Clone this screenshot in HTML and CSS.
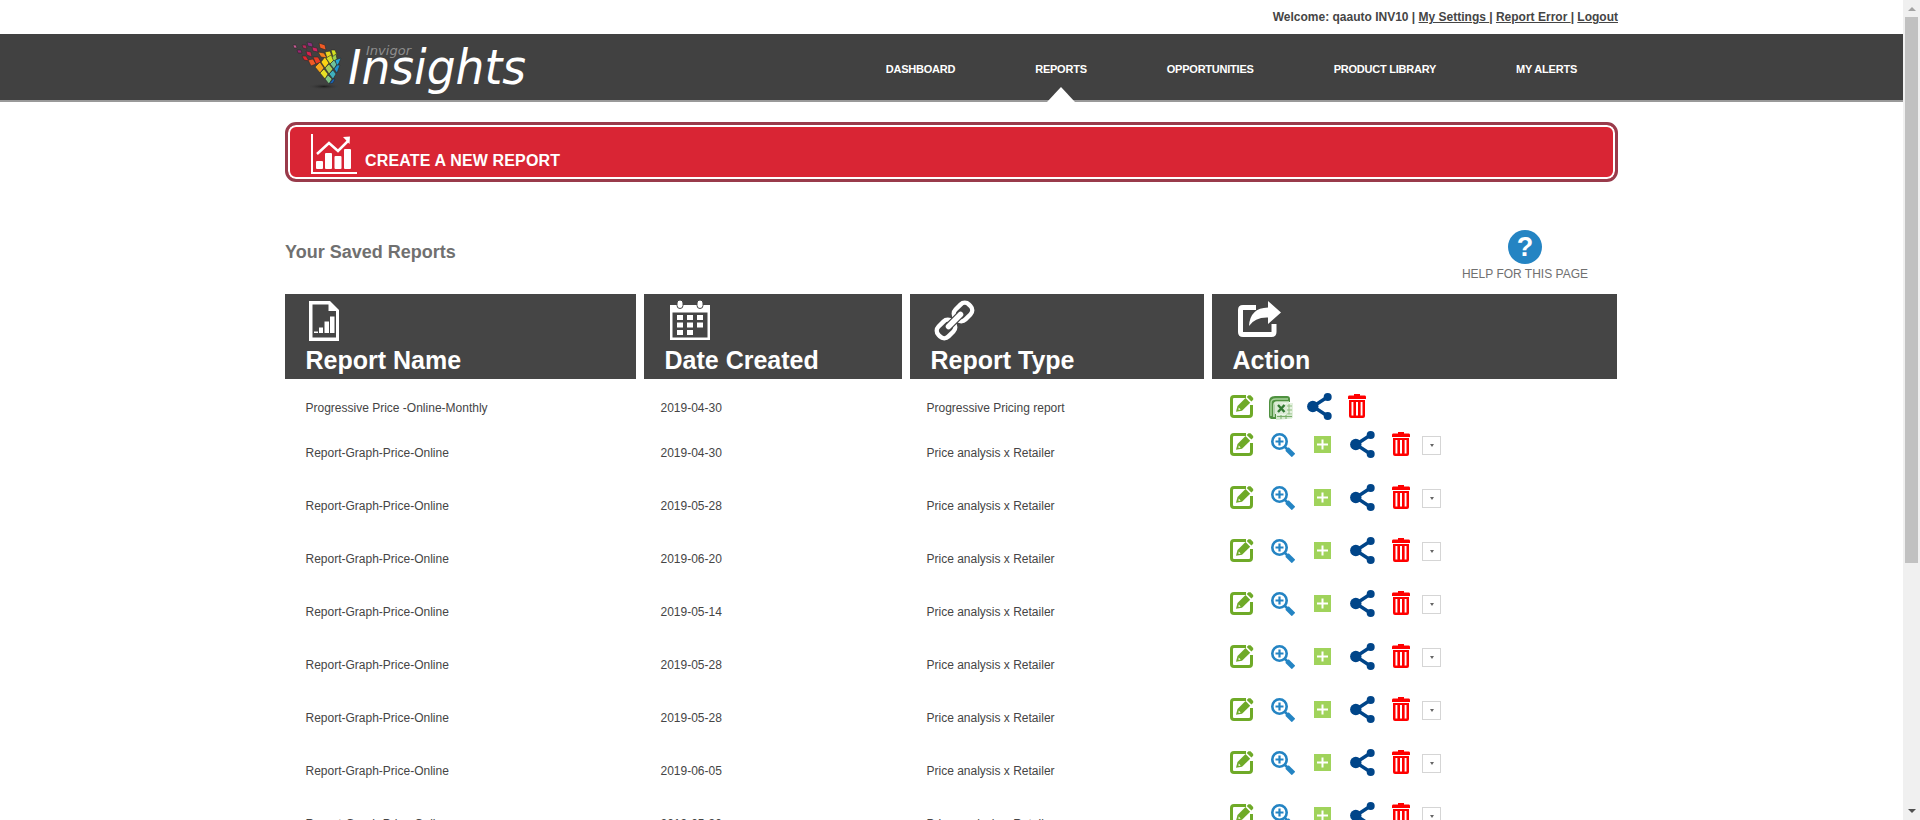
FILE: index.html
```html
<!DOCTYPE html>
<html lang="en">
<head>
<meta charset="utf-8">
<title>Insights - Reports</title>
<link rel="stylesheet" href="styles.css">
</head>
<body>
<svg class="sprite" width="0" height="0">
  <defs>
    <symbol id="i-edit" viewBox="0 0 24 24">
      <path d="M16 1.500H4Q1.500 1.500 1.500 4V19Q1.500 21.500 4 21.500H19Q21.500 21.500 21.500 19V10" fill="none" stroke="#6faa28" stroke-width="3"/>
      <path d="M6 16.800L7.500 11L15.500 3L20.200 7.700L12 15.800Z" fill="#6faa28"/>
      <path d="M16.700 2L18.500 .2H20.500L23.200 3V4.700L21.400 6.600Z" fill="#6faa28"/>
      <path d="M8.700 12.500L10.700 14.500L8.500 15Z" fill="#fff"/>
    </symbol>
    <symbol id="i-zoom" viewBox="0 0 24 24">
      <circle cx="8.500" cy="8.500" r="7.200" fill="none" stroke="#2484c3" stroke-width="2.600"/>
      <path d="M8.500 4.500V12.500M4.500 8.500H12.500" stroke="#2484c3" stroke-width="2.200"/>
      <path d="M13.500 13.500L17 17" stroke="#2484c3" stroke-width="2.600"/>
      <path d="M16 16L22.500 22.500" stroke="#2484c3" stroke-width="4.800"/>
    </symbol>
    <symbol id="i-plus" viewBox="0 0 17 17">
      <path d="M0 0H17V17H0Z" fill="#a0d35b"/>
      <path d="M8.500 3.500V13.500M3 8.500H14" stroke="#fff" stroke-width="2"/>
    </symbol>
    <symbol id="i-share" viewBox="0 0 25 27">
      <path d="M20.500 4L6 13.500L20.500 23" fill="none" stroke="#004589" stroke-width="3.400"/>
      <circle cx="5.800" cy="13.500" r="5.700" fill="#004589"/>
      <circle cx="20.700" cy="4" r="4" fill="#004589"/>
      <circle cx="20.700" cy="23" r="4" fill="#004589"/>
    </symbol>
    <symbol id="i-trash" viewBox="0 0 18 24">
      <path d="M6 0H12V1.500H17Q18 1.500 18 3V5H0V3Q0 1.500 1 1.500H6Z" fill="#f00"/>
      <path d="M1 6H17V22Q17 24 15 24H3Q1 24 1 22Z" fill="#f00"/>
      <path d="M4.500 8V21.500M9 8V21.500M13.500 8V21.500" stroke="#fff" stroke-width="2"/>
      <path d="M6.750 8V21.500M11.250 8V21.500" stroke="#f00" stroke-width="2"/>
    </symbol>
    <symbol id="i-excel" viewBox="0 0 24 24">
      <path d="M0 6Q0 0 6 0H18Q21 0 21 3V6H7V23H3Q0 23 0 20Z" fill="#4f9140"/>
      <path d="M2 20V7Q2 3 7 3H19" fill="none" stroke="#a9d39c" stroke-width="1.500"/>
      <path d="M5 21V9Q5 6 8 6H20" fill="none" stroke="#d4e8cd" stroke-width="1.500"/>
      <path d="M17 7H24V22L17 20Z" fill="#e4f1df"/>
      <path d="M17 10H23M17 14H23M17 18H23M20 8V20" stroke="#8fbd80"/>
      <path d="M6 6L18 8V18L6 18Z" fill="#dcebd7"/>
      <path d="M9 9L15.500 16M15.500 9L9 16" stroke="#327a32" stroke-width="2.400"/>
      <path d="M7 18.500H23V22.500L7 24Z" fill="#d6ead0"/>
      <path d="M8 20.500H23M12 19V23M17 19V23" stroke="#78ad69"/>
    </symbol>
  </defs>
</svg>

<div class="page">
  <div class="userbar wrap">
    <span>Welcome: qaauto INV10 | <a href="#">My Settings </a>| <a href="#">Report Error </a>| <a href="#">Logout</a></span>
  </div>

  <header class="masthead">
    <div class="wrap masthead-row">
      <svg class="logo" width="250" height="66" viewBox="0 0 250 66">
        <defs><radialGradient id="shade"><stop offset="0" stop-color="#1d1d1d"/><stop offset="1" stop-color="#414141" stop-opacity="0"/></radialGradient></defs>
        <ellipse cx="39" cy="52.500" rx="17" ry="3" fill="url(#shade)"/>
        <g stroke="#2a2a2a" stroke-width=".6">
          <path d="M8 11l3 0l1 3l-3 0z" fill="#c45a92"/>
          <path d="M12 16l4 0l1 3l-4 0z" fill="#9b2672"/>
          <path d="M17 11l4 0l1 4l-4-1z" fill="#b7285d"/>
          <path d="M22 8l5 1l1 4l-5-1z" fill="#8e2f80"/>
          <path d="M17 22l4 0l3 5l-5-1z" fill="#e2262e"/>
          <path d="M21 17l5 1l1 5l-5-2z" fill="#d5214d"/>
          <path d="M27 13l5 1l1 4l-5-1z" fill="#d12462"/>
          <path d="M34 9l6 2l1 5l-6-2z" fill="#f05a24"/>
          <path d="M23 26l5-1l3 5l-5 2z" fill="#f05a24"/>
          <path d="M28 23l5 0l3 5l-5 2z" fill="#ea3c23"/>
          <path d="M33 18l6 1l3 5l-6-1z" fill="#f58220"/>
          <path d="M40 18l5-1l2 5l-5 2z" fill="#e8d91f"/>
          <path d="M46 16l4 0l2 5l-4 2z" fill="#d4e021"/>
          <path d="M30 33l5-5l4 6l-4 5z" fill="#f6a61c"/>
          <path d="M36 28l4-5l4 6l-4 5z" fill="#fbd414"/>
          <path d="M41 24l5-3l3 5l-4 4z" fill="#d4df27"/>
          <path d="M47 23l4-3l1 5l-3 3z" fill="#9fcf4a"/>
          <path d="M35 39l4-4l4 5l-3 5z" fill="#e7e026"/>
          <path d="M40 34l4-4l4 5l-4 5z" fill="#a6ce58"/>
          <path d="M45 30l4-4l3 4l-3 5z" fill="#70c19a"/>
          <path d="M50 26l6-2l-2 5l-2 3z" fill="#27a9d8"/>
          <path d="M40 45l3-4l4 4l-3 5z" fill="#7fc686"/>
          <path d="M44 40l4-4l3 4l-3 5z" fill="#3fb0bd"/>
          <path d="M49 35l3-4l3 0l-3 8z" fill="#1f91cf"/>
          <path d="M44 50l4-5l2 0l-2 4z" fill="#1768c2"/>
        </g>
        <text class="logo-small" x="81" y="20.500" textLength="45" lengthAdjust="spacingAndGlyphs">Invigor</text>
        <text class="logo-big" x="63" y="50" textLength="178" lengthAdjust="spacingAndGlyphs">Insights</text>
      </svg>
      <nav class="nav">
        <a class="nav-item" href="#">DASHBOARD</a>
        <a class="nav-item is-active" href="#">REPORTS</a>
        <a class="nav-item" href="#">OPPORTUNITIES</a>
        <a class="nav-item" href="#">PRODUCT LIBRARY</a>
        <a class="nav-item" href="#">MY ALERTS</a>
      </nav>
    </div>
  </header>

  <main class="wrap">
    <a class="create" href="#">
      <svg width="48" height="42" viewBox="0 0 48 42">
        <path d="M2 1V40H47" fill="none" stroke="#fff" stroke-width="2"/>
        <path d="M7 21L19 10L28 18L38 8" fill="none" stroke="#fff" stroke-width="2.500"/>
        <path d="M33 4L40 3.500L39.500 11Z" fill="#fff"/>
        <rect x="6" y="28" width="7" height="8" rx="1" fill="#fff"/>
        <rect x="15" y="20" width="7" height="16" rx="1" fill="#fff"/>
        <rect x="24.500" y="23" width="7" height="13" rx="1" fill="#fff"/>
        <rect x="34" y="16" width="7" height="20" rx="1" fill="#fff"/>
      </svg>
      <span>CREATE A NEW REPORT</span>
    </a>

    <div class="title-row">
      <h1 class="title">Your Saved Reports</h1>
      <a class="help" href="#">
        <span class="help-mark">?</span>
        <span>HELP FOR THIS PAGE</span>
      </a>
    </div>

    <div class="cols heads">
      <div class="head">
        <svg width="40" height="44" viewBox="0 0 40 44">
          <path d="M3 1H24L33 10V41H3Z" fill="#fff"/>
          <path d="M6.500 4.500H22.500V11H30V37.500H6.500Z" fill="#454545"/>
          <path d="M8 31.500h4v1.500h-4zM13 27.500h4v5.500h-4zM18.500 21.500h4.500v11.500h-4.500zM24 16.500h4.500v16.500h-4.500z" fill="#fff"/>
        </svg>
        <h2>Report Name</h2>
      </div>
      <div class="head">
        <svg width="46" height="44" viewBox="0 0 46 44">
          <path d="M5 5H45V40H5Z" fill="#fff"/>
          <path d="M7.500 12.500H42.500V37.500H7.500Z" fill="#454545"/>
          <path d="M12 15h6v5h-6zM22 15h6v5h-6zM32 15h6v5h-6zM12 22.500h6v5h-6zM22 22.500h6v5h-6zM32 22.500h6v5h-6zM12 30h6v5h-6zM22 30h6v5h-6z" fill="#fff"/>
          <rect x="12" y="0" width="6" height="8.500" rx="3" fill="#fff" stroke="#454545"/>
          <rect x="32" y="0" width="6" height="8.500" rx="3" fill="#fff" stroke="#454545"/>
        </svg>
        <h2>Date Created</h2>
      </div>
      <div class="head">
        <svg width="46" height="44" viewBox="0 0 46 44">
          <g fill="none" stroke="#fff" stroke-width="4.500">
            <rect x="-9.500" y="-7" width="19" height="14" rx="6" transform="translate(32 12) rotate(-45)"/>
            <rect x="-9.500" y="-7" width="19" height="14" rx="6" transform="translate(15 29) rotate(-45)"/>
          </g>
          <path d="M17.500 26.500L29.500 14.500" stroke="#454545" stroke-width="8" stroke-linecap="round"/>
          <path d="M17.500 26.500L29.500 14.500" stroke="#fff" stroke-width="5.500" stroke-linecap="round"/>
        </svg>
        <h2>Report Type</h2>
      </div>
      <div class="head">
        <svg width="50" height="44" viewBox="0 0 50 44">
          <path d="M23 7.500H10Q7.500 7.500 7.500 10V32Q7.500 34.500 10 34.500H38.500Q41 34.500 41 32V24" fill="none" stroke="#fff" stroke-width="5"/>
          <path d="M35 1L48 12.500L35 24V17.500Q22 17 16 26Q17 8 35 7.500Z" fill="#fff"/>
        </svg>
        <h2>Action</h2>
      </div>
    </div>

    <div class="cols row row-first">
      <span>Progressive Price -Online-Monthly</span><span>2019-04-30</span><span>Progressive Pricing report</span>
      <div class="acts"><svg class="edit"><use href="#i-edit"/></svg><svg class="excel"><use href="#i-excel"/></svg><svg class="share"><use href="#i-share"/></svg><svg class="trash"><use href="#i-trash"/></svg></div>
    </div>
    <div class="cols row">
      <span>Report-Graph-Price-Online</span><span>2019-04-30</span><span>Price analysis x Retailer</span>
      <div class="acts"><svg class="edit"><use href="#i-edit"/></svg><svg class="zoom"><use href="#i-zoom"/></svg><svg class="plus"><use href="#i-plus"/></svg><svg class="share"><use href="#i-share"/></svg><svg class="trash"><use href="#i-trash"/></svg><i class="more"></i></div>
    </div>
    <div class="cols row">
      <span>Report-Graph-Price-Online</span><span>2019-05-28</span><span>Price analysis x Retailer</span>
      <div class="acts"><svg class="edit"><use href="#i-edit"/></svg><svg class="zoom"><use href="#i-zoom"/></svg><svg class="plus"><use href="#i-plus"/></svg><svg class="share"><use href="#i-share"/></svg><svg class="trash"><use href="#i-trash"/></svg><i class="more"></i></div>
    </div>
    <div class="cols row">
      <span>Report-Graph-Price-Online</span><span>2019-06-20</span><span>Price analysis x Retailer</span>
      <div class="acts"><svg class="edit"><use href="#i-edit"/></svg><svg class="zoom"><use href="#i-zoom"/></svg><svg class="plus"><use href="#i-plus"/></svg><svg class="share"><use href="#i-share"/></svg><svg class="trash"><use href="#i-trash"/></svg><i class="more"></i></div>
    </div>
    <div class="cols row">
      <span>Report-Graph-Price-Online</span><span>2019-05-14</span><span>Price analysis x Retailer</span>
      <div class="acts"><svg class="edit"><use href="#i-edit"/></svg><svg class="zoom"><use href="#i-zoom"/></svg><svg class="plus"><use href="#i-plus"/></svg><svg class="share"><use href="#i-share"/></svg><svg class="trash"><use href="#i-trash"/></svg><i class="more"></i></div>
    </div>
    <div class="cols row">
      <span>Report-Graph-Price-Online</span><span>2019-05-28</span><span>Price analysis x Retailer</span>
      <div class="acts"><svg class="edit"><use href="#i-edit"/></svg><svg class="zoom"><use href="#i-zoom"/></svg><svg class="plus"><use href="#i-plus"/></svg><svg class="share"><use href="#i-share"/></svg><svg class="trash"><use href="#i-trash"/></svg><i class="more"></i></div>
    </div>
    <div class="cols row">
      <span>Report-Graph-Price-Online</span><span>2019-05-28</span><span>Price analysis x Retailer</span>
      <div class="acts"><svg class="edit"><use href="#i-edit"/></svg><svg class="zoom"><use href="#i-zoom"/></svg><svg class="plus"><use href="#i-plus"/></svg><svg class="share"><use href="#i-share"/></svg><svg class="trash"><use href="#i-trash"/></svg><i class="more"></i></div>
    </div>
    <div class="cols row">
      <span>Report-Graph-Price-Online</span><span>2019-06-05</span><span>Price analysis x Retailer</span>
      <div class="acts"><svg class="edit"><use href="#i-edit"/></svg><svg class="zoom"><use href="#i-zoom"/></svg><svg class="plus"><use href="#i-plus"/></svg><svg class="share"><use href="#i-share"/></svg><svg class="trash"><use href="#i-trash"/></svg><i class="more"></i></div>
    </div>
    <div class="cols row">
      <span>Report-Graph-Price-Online</span><span>2019-05-30</span><span>Price analysis x Retailer</span>
      <div class="acts"><svg class="edit"><use href="#i-edit"/></svg><svg class="zoom"><use href="#i-zoom"/></svg><svg class="plus"><use href="#i-plus"/></svg><svg class="share"><use href="#i-share"/></svg><svg class="trash"><use href="#i-trash"/></svg><i class="more"></i></div>
    </div>
  </main>
</div>

<div class="scrollbar">
  <i class="arrow arrow-up"></i>
  <i class="thumb"></i>
  <i class="arrow arrow-down"></i>
</div>
</body>
</html>
```
FILE: styles.css
```css
* { box-sizing: border-box; }
body {
  margin: 0;
  height: 820px;
  overflow: hidden;
  display: flex;
  background: #fff;
  color: #454545;
  font: 12px/16px "Liberation Sans", Arial, sans-serif;
}
a { color: inherit; }
svg { display: block; flex: none; }
.sprite { position: absolute; }
.page { width: 1903px; height: 820px; overflow: hidden; }
.wrap { width: 1333px; margin: 0 auto; }

.userbar { height: 34px; padding-top: 9px; text-align: right; font-weight: bold; }

.masthead { height: 68px; background: #414141; border-bottom: 2px solid #999; }
.masthead-row { display: flex; justify-content: space-between; height: 68px; }
.logo { overflow: visible; }
.logo-small { font: italic 13px "DejaVu Sans", sans-serif; fill: #8d8d8d; }
.logo-big { font: italic 48px "DejaVu Sans", sans-serif; fill: #fff; }
.nav { display: flex; gap: 80px; padding-right: 41px; }
.nav-item {
  position: relative;
  height: 68px;
  color: #fff;
  font-size: 11px;
  font-weight: bold;
  letter-spacing: -0.23px;
  line-height: 70px;
  text-decoration: none;
  white-space: nowrap;
}
.is-active::after {
  content: "";
  position: absolute;
  left: 50%;
  bottom: 0;
  margin-left: -14px;
  border: 14px solid transparent;
  border-top: 0;
  border-bottom: 15px solid #fff;
}

.create {
  display: flex;
  height: 60px;
  margin-top: 20px;
  padding: 6px 0 0 20px;
  border: 3px solid #993b4b;
  border-radius: 11px;
  background: #d92534;
  box-shadow: inset 0 0 0 2px #fff;
  color: #fff;
  font-size: 16px;
  font-weight: bold;
  letter-spacing: 0.15px;
  text-decoration: none;
}
.create svg { margin: 2px 7px 0 2px; }
.create span { padding-top: 22px; }

.title-row { display: flex; justify-content: space-between; height: 112px; }
.title { margin: 59px 0 0; font-size: 18px; line-height: 22px; color: #707070; }
.help {
  display: flex;
  flex-direction: column;
  align-items: center;
  margin: 48px 30px 0 0;
  color: #707070;
  text-decoration: none;
}
.help-mark {
  width: 34px;
  height: 34px;
  border-radius: 50%;
  margin-bottom: 2px;
  background: #2484c3;
  color: #fff;
  font: bold 27px/34px "Liberation Sans", sans-serif;
  text-align: center;
}

.cols { display: grid; grid-template-columns: 351px 258px 294px 405px; column-gap: 8px; }
.head { height: 85px; padding: 6px 0 0 20.5px; background: #454545; color: #fff; }
.head h2 { margin: 2px 0 0; font-size: 25px; line-height: 28px; }

.row { height: 53px; }
.row > span { padding: 14px 0 0 20.5px; }
.row > span:nth-child(2) { padding-left: 16.5px; }
.row > span:nth-child(3) { padding-left: 16.5px; }
.row-first { height: 38px; margin-top: 14px; }
.row-first > span { padding-top: 7px; }
.acts { display: flex; align-items: flex-start; padding-left: 18px; }
.edit { width: 24px; height: 24px; margin-top: 2px; }
.zoom { width: 24px; height: 24px; margin: 2px 0 0 17px; }
.plus { width: 17px; height: 17px; margin: 5px 0 0 19px; }
.share { width: 25px; height: 27px; margin-left: 19px; }
.trash { width: 18px; height: 24px; margin: 1px 0 0 17px; }
.excel { width: 24px; height: 24px; margin: 3px 0 0 15px; }
.excel + .share { margin-left: 14px; }
.row-first .trash { margin-left: 16px; }
.more {
  display: flex;
  align-items: center;
  justify-content: center;
  width: 19px;
  height: 19px;
  margin: 5px 0 0 12px;
  border: 1px solid #d5d5d5;
}
.more::before { content: ""; border: 2.5px solid transparent; border-top: 3px solid #666; border-bottom: 0; }

.scrollbar {
  display: flex;
  flex-direction: column;
  align-items: center;
  width: 17px;
  height: 820px;
  background: #f0f0f0;
}
.arrow { border: 4px solid transparent; }
.arrow-up { margin: 7px 0 6px; border-top: 0; border-bottom-color: #a3a3a3; }
.thumb { width: 13px; height: 546px; background: #c1c1c1; }
.arrow-down { margin-top: auto; margin-bottom: 7px; border-bottom: 0; border-top-color: #505050; }
```
